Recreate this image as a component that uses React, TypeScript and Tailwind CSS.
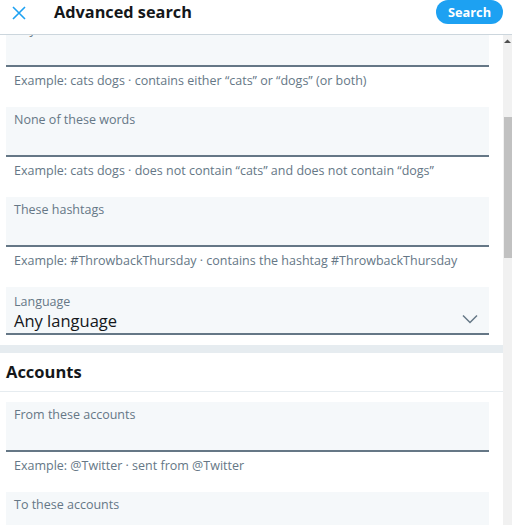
const fieldBox = "bg-[#f5f8fa] border-b-2 border-[#657786] px-2";

const Field = ({ label, hint }: { label: string; hint?: string }) => (
  <div className="flex flex-col">
    <div className={`${fieldBox} h-[50px] pt-[5px]`}>
      <p className="text-[12.5px] leading-[16px] text-[#657786]">{label}</p>
    </div>
    {hint && (
      <div className="h-[40px] px-2 pt-[5px] text-[12.5px] leading-[18px] text-[#657786]">
        {hint}
      </div>
    )}
  </div>
);

const App = () => {
  return (
    <div
      className="w-[512px] h-[525px] overflow-hidden bg-white flex flex-col"
      style={{ fontFamily: '"Open Sans", "Noto Sans", sans-serif' }}
    >
      <header className="h-[35px] shrink-0 border-b border-[#ccd6dd] flex items-start pr-[9px]">
        <div className="w-[54px] h-[25px] flex items-center pl-[12px]">
          <svg width="14" height="14" viewBox="0 0 14 14" className="text-[#1da1f2]">
            <path d="M1 1 L13 13 M13 1 L1 13" stroke="currentColor" strokeWidth="1.6" fill="none" />
          </svg>
        </div>
        <h1 className="flex-1 h-[25px] flex items-center text-[16.3px] font-bold text-[#14171a]">
          Advanced search
        </h1>
        <button className="h-[24px] w-[67px] rounded-full bg-[#1da1f2] text-white text-[12.8px] font-bold leading-none">
          Search
        </button>
      </header>

      <div className="flex-1 flex overflow-hidden">
        <div className="flex-1 overflow-hidden">
          <div className="-mt-[18px] px-[6px] pr-[14px]">
            <Field
              label="Any of these words"
              hint="Example: cats dogs · contains either “cats” or “dogs” (or both)"
            />
            <Field
              label="None of these words"
              hint="Example: cats dogs · does not contain “cats” and does not contain “dogs”"
            />
            <Field
              label="These hashtags"
              hint="Example: #ThrowbackThursday · contains the hashtag #ThrowbackThursday"
            />
            <div className={`${fieldBox} h-[48px] flex items-end justify-between pb-[1px]`}>
              <div className="flex flex-col">
                <span className="text-[12.5px] leading-[16px] text-[#657786]">Language</span>
                <span className="text-[16.5px] leading-[22px] text-[#14171a]">Any language</span>
              </div>
              <svg width="16" height="10" viewBox="0 0 16 10" className="mb-[8px] mr-[3px] text-[#657786]">
                <path d="M1 1.5 L8 8.5 L15 1.5" stroke="currentColor" strokeWidth="1.5" fill="none" />
              </svg>
            </div>
          </div>
          <div className="mt-[10px] h-[8px] bg-[#e6ecf0]" />
          <div className="h-[39px] border-b border-[#e6ecf0] px-[6px] flex items-center">
            <h2 className="text-[16.5px] font-bold text-[#14171a]">Accounts</h2>
          </div>
          <div className="pt-[10px] px-[6px] pr-[14px]">
            <Field label="From these accounts" hint="Example: @Twitter · sent from @Twitter" />
            <Field label="To these accounts" />
          </div>
        </div>

        <div className="w-[9px] shrink-0 bg-[#f1f1f1] flex flex-col items-center">
          <svg width="7" height="5" viewBox="0 0 7 5" className="mt-[4px] text-[#505050]">
            <path d="M0 4 L3.5 0.5 L7 4 Z" fill="currentColor" />
          </svg>
          <div className="mt-[73px] w-[8px] h-[141px] bg-[#c1c1c1] self-end" />
        </div>
      </div>
    </div>
  );
};

export default App;
